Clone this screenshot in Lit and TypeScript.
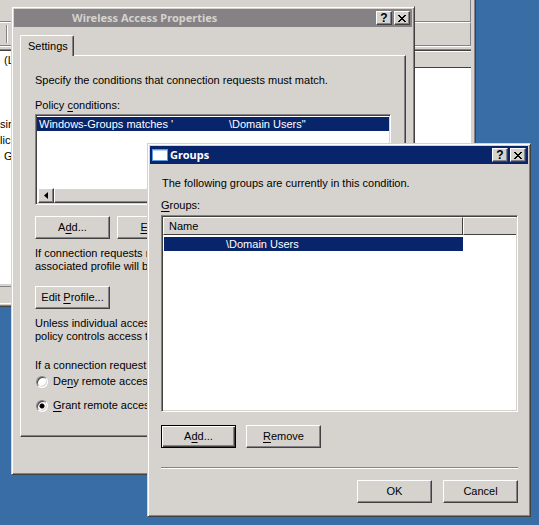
import { LitElement, html, css } from "lit";
import { customElement, property } from "lit/decorators.js";

const controls = css`
  * {
    box-sizing: border-box;
  }
  p,
  ul,
  fieldset {
    margin: 0;
    padding: 0;
    border: 0;
    list-style: none;
  }
  .key {
    text-decoration: underline;
    text-underline-offset: 2px;
  }
  .push {
    width: 75px;
    height: 23px;
    padding: 0;
    font: inherit;
    color: #000;
    background: #d6d3ce;
    border: 1px solid;
    border-color: #fff #424142 #424142 #fff;
    box-shadow: inset -1px -1px #848284;
    white-space: nowrap;
  }
  .default {
    border-color: #000;
    box-shadow: inset 1px 1px #fff, inset -1px -1px #424142, inset -2px -2px #848284;
  }
  .sunken {
    background: #fff;
    border: 1px solid;
    border-color: #848284 #fff #fff #848284;
    box-shadow: inset 1px 1px #424142, inset -1px -1px #d6d3ce;
    padding: 1px;
  }
`;

@customElement("dialog-frame")
class DialogFrame extends LitElement {
  @property() caption = "";
  @property({ type: Boolean }) active = false;
  @property({ type: Boolean }) icon = false;

  static styles = css`
    :host {
      display: block;
      box-sizing: border-box;
      background: #d6d3ce;
      border: 1px solid;
      border-color: #d6d3ce #424142 #424142 #d6d3ce;
      box-shadow: inset 1px 1px #fff, inset -1px -1px #848284;
      padding: 2px;
    }
    .bar {
      display: flex;
      align-items: center;
      gap: 2px;
      height: 18px;
      padding: 0 2px;
      background: #848284;
      color: #d6d3ce;
      font: bold 11px/18px "Noto Sans", sans-serif;
    }
    .bar.active {
      background: #08246b;
      color: #fff;
    }
    .title {
      flex: 1;
      white-space: pre;
      padding-left: 56px;
    }
    .active .title {
      padding-left: 0;
    }
    .icon {
      width: 16px;
      height: 14px;
    }
    .cap {
      display: flex;
      align-items: center;
      justify-content: center;
      width: 16px;
      height: 14px;
      padding: 0;
      background: #d6d3ce;
      color: #000;
      border: 1px solid;
      border-color: #fff #424142 #424142 #fff;
      box-shadow: inset -1px -1px #848284;
      font: bold 12px/12px "Liberation Sans", sans-serif;
    }
  `;

  render() {
    return html`
      <div class="bar ${this.active ? "active" : ""}">
        ${this.icon
          ? html`<svg class="icon" viewBox="0 0 16 14" aria-hidden="true">
              <rect x="0.5" y="1.5" width="15" height="11" fill="#fff" stroke="#5a9ade" />
              <path d="M1 2.5h14" stroke="#b5d3f7" />
            </svg>`
          : ""}
        <span class="title">${this.caption}</span>
        <button class="cap" aria-label="Help">?</button>
        <button class="cap" aria-label="Close">
          <svg width="8" height="7" viewBox="0 0 8 7" shape-rendering="crispEdges" aria-hidden="true">
            <path
              d="M0 0h2v1h1v1h2v-1h1v-1h2v1h-1v1h-1v1h-1v1h1v1h1v1h1v1h-2v-1h-1v-1h-2v1h-1v1h-2v-1h1v-1h1v-1h1v-1h-1v-1h-1v-1h-1z"
            />
          </svg>
        </button>
      </div>
      <slot></slot>
    `;
  }
}

@customElement("console-window")
class ConsoleWindow extends LitElement {
  static styles = css`
    * {
      box-sizing: border-box;
    }
    :host {
      display: flex;
      flex-direction: column;
      box-sizing: border-box;
      background: #d6d3ce;
      border: 0 solid #424142;
      border-width: 0 1px 1px 0;
      box-shadow: inset -1px -1px #848284;
      padding: 0 4px 2px 0;
      font: 11px/16px "Liberation Sans", Arial, sans-serif;
    }
    .menu {
      height: 22px;
      border-bottom: 1px solid #848284;
      border-right: 1px solid #848284;
    }
    .tools {
      display: flex;
      height: 24px;
      padding: 2px 6px;
      border: 1px solid;
      border-color: #fff #848284 #848284 transparent;
      border-left: 0;
      box-shadow: 0 1px #fff;
    }
    .grip {
      border-left: 1px solid #848284;
      border-right: 1px solid #fff;
    }
    .panes {
      display: flex;
      margin-top: 3px;
      border-top: 1px solid #848284;
      box-shadow: inset 0 1px #424142;
      padding-top: 1px;
      background: #fff;
      min-height: 235px;
    }
    .tree {
      flex: 1;
      padding-top: 1px;
    }
    .node {
      height: 16px;
    }
    .first {
      margin-bottom: 48px;
    }
    .leaf {
      padding-left: 4px;
    }
    .list {
      flex: 1;
    }
    .head {
      height: 17px;
      background: #d6d3ce;
      border-bottom: 1px solid #424142;
      box-shadow: inset 0 1px #fff;
    }
    .status {
      height: 18px;
      margin-top: 2px;
      border-top: 1px solid #848284;
      border-bottom: 1px solid #fff;
    }
  `;

  render() {
    return html`
      <div class="menu"></div>
      <div class="tools"><span class="grip"></span></div>
      <div class="panes">
        <div class="tree">
          <div class="node leaf first">(L</div>
          <div class="node">sin</div>
          <div class="node">licie</div>
          <div class="node leaf">G</div>
        </div>
        <div class="list"><div class="head"></div></div>
      </div>
      <div class="status"></div>
    `;
  }
}

@customElement("policy-settings")
class PolicySettings extends LitElement {
  static styles = [
    controls,
    css`
      :host {
        display: block;
        padding: 8px 6px 35px;
        white-space: nowrap;
      }
      .tab {
        display: block;
        position: relative;
        width: 54px;
        height: 21px;
        margin-bottom: -1px;
        padding: 0 0 0 7px;
        text-align: left;
        font: inherit;
        color: #000;
        background: #d6d3ce;
        border: 1px solid;
        border-color: #fff #424142 transparent #fff;
        border-bottom: 0;
        border-radius: 2px 2px 0 0;
        box-shadow: inset -1px 0 #848284;
      }
      .panel {
        padding: 18px 14px 24px;
        border: 1px solid;
        border-color: #fff #424142 #424142 #fff;
        box-shadow: inset -1px -1px #848284;
      }
      .label {
        margin-top: 12px;
      }
      .conditions {
        display: flex;
        flex-direction: column;
        justify-content: space-between;
        height: 91px;
        margin-top: 2px;
        padding: 2px 1px 1px;
      }
      .item {
        display: grid;
        grid-template-columns: 190px auto;
        padding-left: 2px;
        height: 14px;
        line-height: 14px;
        background: #08246b;
        color: #fff;
      }
      .scroll {
        display: flex;
        height: 15px;
        background: #d6d3ce;
        margin-left: 1px;
      }
      .arrow,
      .thumb {
        border: 1px solid;
        border-color: #fff #424142 #424142 #fff;
        background: #d6d3ce;
        box-shadow: inset -1px -1px #848284;
        padding: 0;
      }
      .arrow {
        display: flex;
        align-items: center;
        justify-content: center;
        width: 16px;
      }
      .thumb {
        flex: 1;
      }
      .row {
        display: flex;
        gap: 7px;
        margin-top: 11px;
      }
      .note {
        margin-top: 8px;
      }
      .profile {
        display: block;
        margin-top: 13px;
      }
      .access {
        margin-top: 16px;
        min-width: 0;
      }
      .legend {
        padding: 0;
      }
      .choice {
        display: flex;
        align-items: center;
        gap: 5px;
        height: 13px;
        margin-top: 3px;
      }
      .choice + .choice {
        margin-top: 11px;
      }
      .radio {
        appearance: none;
        width: 12px;
        height: 12px;
        margin: 0 0 0 1px;
        border-radius: 50%;
        border: 1px solid;
        border-color: #848284 #fff #fff #848284;
        box-shadow: inset 1px 1px #424142, inset -1px -1px #d6d3ce;
        background: #fff;
      }
      .radio:checked {
        background: radial-gradient(circle, #000 2px, #fff 3px);
      }
    `,
  ];

  render() {
    return html`
      <button class="tab" role="tab" aria-selected="true">Settings</button>
      <div class="panel" role="tabpanel">
        <p>Specify the conditions that connection requests must match.</p>
        <p class="label" id="conditions">Policy <span class="key">c</span>onditions:</p>
        <div class="sunken conditions">
          <ul role="listbox" aria-labelledby="conditions">
            <li class="item" role="option" aria-selected="true">
              <span>Windows-Groups matches '</span><span>\\Domain Users"</span>
            </li>
          </ul>
          <div class="scroll">
            <button class="arrow" aria-label="Scroll left">
              <svg width="4" height="7" viewBox="0 0 4 7" aria-hidden="true"><path d="M4 0v7L0 3.5z" /></svg>
            </button>
            <div class="thumb"></div>
          </div>
        </div>
        <div class="row">
          <button class="push">A<span class="key">d</span>d...</button>
          <button class="push"><span class="key">E</span>dit...</button>
        </div>
        <p class="note">If connection requests match,<br />associated profile will be used.</p>
        <button class="push profile">Edit <span class="key">P</span>rofile...</button>
        <p class="note">Unless individual access is set,<br />policy controls access to it.</p>
        <fieldset class="access">
          <legend class="legend">If a connection request matches:</legend>
          <label class="choice">
            <input class="radio" type="radio" name="access" />
            <span>De<span class="key">n</span>y remote access</span>
          </label>
          <label class="choice">
            <input class="radio" type="radio" name="access" checked />
            <span><span class="key">G</span>rant remote access</span>
          </label>
        </fieldset>
      </div>
    `;
  }
}

@customElement("group-list")
class GroupList extends LitElement {
  static styles = [
    controls,
    css`
      :host {
        display: block;
        padding: 13px 10px 11px 11px;
        white-space: nowrap;
      }
      .text {
        padding-left: 1px;
      }
      .label {
        margin-top: 9px;
      }
      .groups {
        height: 197px;
        margin-top: 3px;
        padding: 1px;
      }
      .table {
        width: 100%;
        table-layout: fixed;
        border-collapse: separate;
        border-spacing: 0;
      }
      .rest {
        width: 53px;
      }
      th {
        height: 18px;
        padding: 0 0 0 5px;
        text-align: left;
        font-weight: normal;
        background: #d6d3ce;
        border: 1px solid;
        border-color: #fff #424142 #424142 #fff;
      }
      th.rest {
        border-right: 0;
      }
      td {
        padding: 2px 0 0 1px;
      }
      .name {
        display: block;
        height: 14px;
        line-height: 14px;
        padding-left: 62px;
        background: #08246b;
        color: #fff;
      }
      .row {
        display: flex;
        gap: 10px;
        margin-top: 13px;
      }
      .rule {
        height: 2px;
        margin: 19px 0 0;
        border: 0;
        border-top: 1px solid #848284;
        border-bottom: 1px solid #fff;
      }
      .end {
        justify-content: flex-end;
        margin-top: 11px;
        gap: 11px;
      }
    `,
  ];

  render() {
    return html`
      <p class="text">The following groups are currently in this condition.</p>
      <p class="label" id="groups"><span class="key">G</span>roups:</p>
      <div class="sunken groups">
        <table class="table" aria-labelledby="groups">
          <thead>
            <tr>
              <th>Name</th>
              <th class="rest"></th>
            </tr>
          </thead>
          <tbody>
            <tr>
              <td><span class="name">\\Domain Users</span></td>
              <td></td>
            </tr>
          </tbody>
        </table>
      </div>
      <div class="row">
        <button class="push default">A<span class="key">d</span>d...</button>
        <button class="push"><span class="key">R</span>emove</button>
      </div>
      <hr class="rule" />
      <div class="row end">
        <button class="push">OK</button>
        <button class="push">Cancel</button>
      </div>
    `;
  }
}

@customElement("app-root")
class AppRoot extends LitElement {
  static styles = css`
    :host {
      display: block;
      position: relative;
      min-height: 100vh;
      overflow: hidden;
      background: #396da5;
      color: #000;
      font: 11px/13px "Liberation Sans", Arial, sans-serif;
    }
    .console {
      position: absolute;
      top: 0;
      left: 0;
      right: 63px;
    }
    .policy {
      position: absolute;
      top: 6px;
      left: 11px;
      right: 124px;
    }
    .members {
      position: absolute;
      top: 143px;
      left: 147px;
      right: 8px;
    }
  `;

  render() {
    return html`
      <console-window class="console"></console-window>
      <dialog-frame class="policy" caption="Wireless Access Properties">
        <policy-settings></policy-settings>
      </dialog-frame>
      <dialog-frame class="members" caption="Groups" active icon>
        <group-list></group-list>
      </dialog-frame>
    `;
  }
}
